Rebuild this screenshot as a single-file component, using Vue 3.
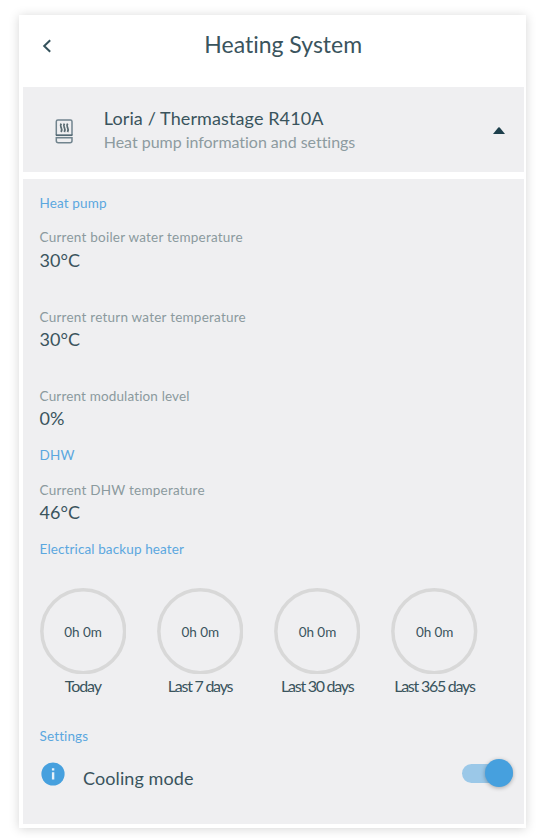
<script setup>
import { ref } from 'vue'

const heatPump = [
  { label: 'Current boiler water temperature', value: '30°C', cls: 'wide' },
  { label: 'Current return water temperature', value: '30°C', cls: 'wide' },
  { label: 'Current modulation level', value: '0%', cls: 'medium' },
]
const usage = [
  { label: 'Today', value: '0h 0m', cls: 'today' },
  { label: 'Last 7 days', value: '0h 0m', cls: 'week' },
  { label: 'Last 30 days', value: '0h 0m', cls: 'month' },
  { label: 'Last 365 days', value: '0h 0m', cls: 'year' },
]
const cooling = ref(true)
</script>

<template>
  <div class="page">
    <main class="card">
      <header class="bar">
        <svg class="back" viewBox="0 0 10 14" width="10" height="14">
          <path d="M8.200 1.200 2.200 7l6 5.800" fill="none" stroke="#35525c" stroke-width="2" />
        </svg>
        <h1 class="title">Heating System</h1>
      </header>

      <section class="device">
        <svg class="pump" viewBox="0 0 18 25" width="18" height="25" fill="none" stroke="#71848e" stroke-width="1.500">
          <path d="M1.300 16V2.600Q1.300 1 2.900 1h12.500Q17 1 17 2.600V16" />
          <path d="M1.300 18.800H17v2.900q0 2-2 2H3.300q-2 0-2-2Z" />
          <path d="M.8 16.200h16.700" stroke="#526873" stroke-width="1.700" />
          <path
            d="M6.300 4.600c-1.500 2-.9 2.600-.1 4 .8 1.400.9 2.400-.1 4.400M9.500 4.600c-1.500 2-.9 2.600-.1 4 .8 1.400.9 2.400-.1 4.400M12.700 4.600c-1.500 2-.9 2.600-.1 4 .8 1.400.9 2.400-.1 4.400"
            stroke="#5a6b72"
            stroke-width="1.800"
          />
        </svg>
        <div class="names">
          <div class="name">Loria / Thermastage R410A</div>
          <div class="about">Heat pump information and settings</div>
        </div>
        <svg class="caret" viewBox="0 0 12 7" width="12" height="7">
          <path d="M0 7 5.300 .6q.7-.8 1.400 0L12 7Z" fill="#1d3f4c" />
        </svg>
      </section>

      <section class="body">
        <h2 class="heading">Heat pump</h2>
        <dl class="readings">
          <div v-for="r in heatPump" :key="r.label">
            <dt :class="r.cls">{{ r.label }}</dt>
            <dd>{{ r.value }}</dd>
          </div>
        </dl>
        <h2 class="heading dhw">DHW</h2>
        <dl class="readings">
          <div>
            <dt class="wide">Current DHW temperature</dt>
            <dd>46°C</dd>
          </div>
        </dl>
        <h2 class="heading backup">Electrical backup heater</h2>
        <div class="rings">
          <figure v-for="u in usage" :key="u.label">
            <div class="ring">
              <svg viewBox="0 0 86.500 86.500" width="86.500" height="86.500">
                <circle cx="43.250" cy="43.250" r="41.400" fill="none" stroke="#d8d8d8" stroke-width="3.500" />
              </svg>
              <span>{{ u.value }}</span>
            </div>
            <figcaption :class="u.cls">{{ u.label }}</figcaption>
          </figure>
        </div>
        <h2 class="heading settings">Settings</h2>
        <div class="option">
          <svg class="info" viewBox="0 0 24 24" width="24" height="24">
            <circle cx="12" cy="12" r="11.600" fill="#46a0de" />
            <path d="M10.900 6.300h2.400v2.300h-2.400ZM10.900 10.300h2.400v7.300h-2.400Z" fill="#e6f1f9" />
          </svg>
          <span class="mode">Cooling mode</span>
          <button class="toggle" :class="{ on: cooling }" aria-label="Cooling mode" @click="cooling = !cooling">
            <i class="knob"></i>
          </button>
        </div>
      </section>
    </main>
  </div>
</template>

<style>
body {
  background: #fff;
}
</style>

<style scoped>
* {
  box-sizing: border-box;
  margin: 0;
  padding: 0;
  font-weight: 400;
}
.page {
  height: 838px;
  padding: 14.500px 0 0 18.700px;
  overflow: hidden;
}
.card {
  width: 507.800px;
  height: 813px;
  padding: 0 2.500px 0 4.600px;
  background: #fff;
  box-shadow: 0 1px 10px rgba(0, 0, 0, 0.17);
  font-family: Lato, sans-serif;
  font-variant-ligatures: none;
  color: #3a545d;
  white-space: nowrap;
}
.bar {
  display: flex;
  align-items: center;
  height: 72.700px;
  padding: 0 0 10px 18.500px;
}
.back {
  flex: none;
}
.title {
  margin: -3px 0 0 152.500px;
  font-size: 23px;
  line-height: 30px;
}
.device {
  display: flex;
  align-items: center;
  height: 84.800px;
  padding: 0 19px 0 31.300px;
  background: #efeff1;
}
.pump {
  margin-top: 3px;
}
.names {
  margin: -1px 0 0 31.200px;
}
.name {
  font-size: 18px;
  line-height: 24px;
  letter-spacing: 0.110px;
}
.about {
  font-size: 16px;
  line-height: 23px;
  letter-spacing: -0.030px;
  color: #8d9ba0;
}
.caret {
  margin: 1px 0 0 auto;
}
.body {
  height: 645px;
  margin-top: 7px;
  padding: 15px 11px 0 16.300px;
  background: #efeff1;
}
.heading {
  font-size: 13.500px;
  line-height: 18px;
  letter-spacing: 0.120px;
  color: #5ba7df;
}
.readings {
  margin-top: 16.500px;
  display: grid;
  row-gap: 35.700px;
}
dt {
  font-size: 13.500px;
  line-height: 19.500px;
  height: 19.500px;
  color: #8b9a9e;
}
.wide {
  letter-spacing: 0.230px;
}
.medium {
  letter-spacing: 0.150px;
}
dd {
  font-size: 18px;
  line-height: 24px;
}
.dhw,
.backup {
  margin-top: 15.800px;
}
.rings {
  display: grid;
  grid-template-columns: repeat(4, 86.500px);
  column-gap: 30.700px;
  margin-top: 29.800px;
}
.ring {
  display: grid;
  place-items: center;
  height: 86.500px;
  font-size: 13.500px;
}
.ring > * {
  grid-area: 1 / 1;
}
.ring span {
  padding: 2px 0 0 0.500px;
  letter-spacing: -0.050px;
}
figcaption {
  display: flex;
  justify-content: center;
  line-height: 24px;
  font-size: 16px;
  letter-spacing: -1.250px;
}
figcaption.today {
  letter-spacing: -1.100px;
}
.settings {
  margin-top: 29px;
}
.option {
  display: flex;
  height: 62px;
  margin-top: 15px;
  padding-left: 1.500px;
}
.info {
  margin-top: 2px;
}
.mode {
  margin: 6px 0 0 18px;
  font-size: 18px;
  line-height: 24px;
  letter-spacing: 0.080px;
}
.toggle {
  display: flex;
  align-items: center;
  width: 51px;
  height: 19px;
  margin: 3.700px 0 0 auto;
  border: 0;
  border-radius: 10px;
  background: #c9cbcd;
}
.toggle.on {
  justify-content: flex-end;
  background: #9bc8e8;
}
.knob {
  flex: none;
  width: 28px;
  height: 28px;
  border-radius: 50%;
  background: #fff;
  box-shadow: 0 1px 4px rgba(0, 0, 0, 0.3);
}
.on .knob {
  background: #46a0de;
}
</style>
